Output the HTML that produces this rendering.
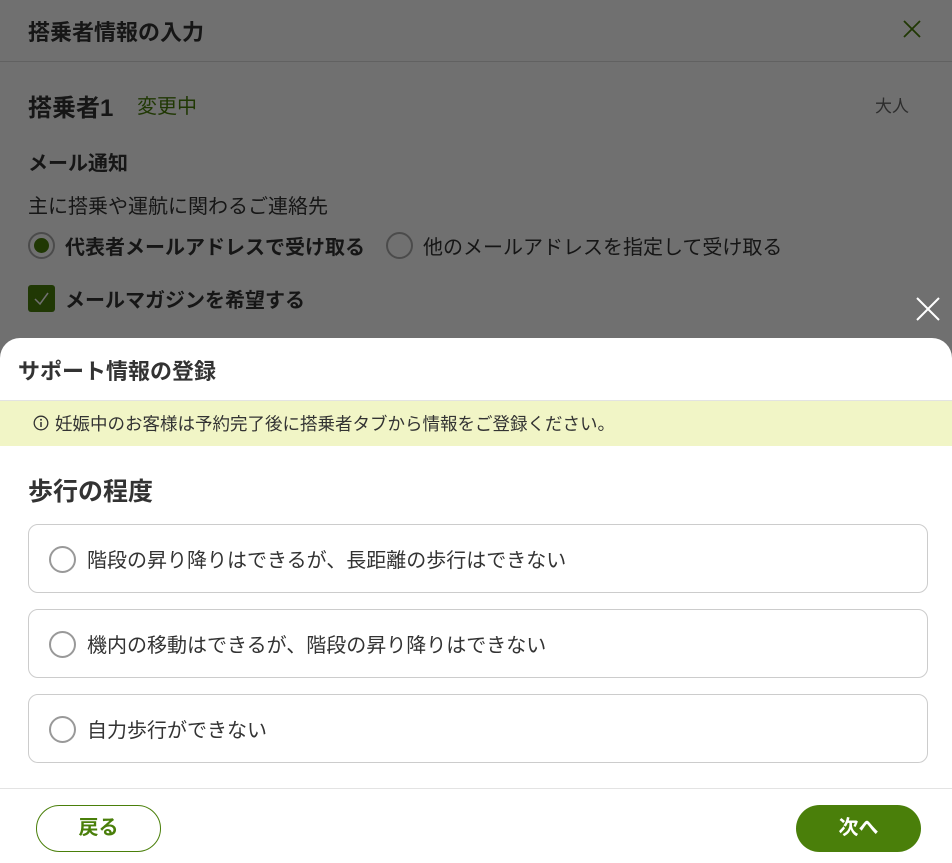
<!DOCTYPE html>
<html><head><meta charset="utf-8"><style>
*{box-sizing:border-box;margin:0;padding:0}
body{width:952px;height:863px;position:relative;overflow:hidden;background:#fff;font-family:"Liberation Sans","Noto Sans CJK JP",sans-serif;color:#333}
.a{position:absolute;white-space:nowrap}
.ov{position:absolute;left:0;top:0;width:952px;height:863px;background:rgba(0,0,0,0.56)}
.sheet{position:absolute;left:0;top:338px;width:952px;height:525px;background:#fff;border-radius:20px 20px 0 0}
.opt{position:absolute;left:28px;width:900px;height:69px;border:1px solid #ccc;border-radius:10px}
.opt .r{position:absolute;left:20px;top:21px;width:27px;height:27px;border:2px solid #999;border-radius:50%}
.opt span{position:absolute;left:58px;top:19px;font-size:20px;color:#333}
</style></head><body>
<div class="a" style="left:28px;top:15px;font-size:22px;font-weight:bold">搭乗者情報の入力</div>
<svg class="a" style="left:903px;top:20px" width="18" height="18"><path d="M1 1L17 17M17 1L1 17" stroke="#4a7f0a" stroke-width="1.8"/></svg>
<div class="a" style="left:0;top:61px;width:952px;height:1px;background:#ddd"></div>
<div class="a" style="left:28px;top:88px;font-size:24px;font-weight:bold">搭乗者1</div>
<div class="a" style="left:137px;top:90px;font-size:20px;color:#4a7f0a">変更中</div>
<div class="a" style="left:875px;top:92px;font-size:17px;color:#666">大人</div>
<div class="a" style="left:28px;top:147px;font-size:20px;font-weight:bold">メール通知</div>
<div class="a" style="left:28px;top:190px;font-size:20px">主に搭乗や運航に関わるご連絡先</div>
<div class="a" style="left:28px;top:232px;width:27px;height:27px;border:2px solid #aaa;border-radius:50%"><div style="position:absolute;left:4px;top:4px;width:15px;height:15px;border-radius:50%;background:#4a7f0a"></div></div>
<div class="a" style="left:65px;top:231px;font-size:20px;font-weight:bold">代表者メールアドレスで受け取る</div>
<div class="a" style="left:386px;top:232px;width:27px;height:27px;border:2px solid #aaa;border-radius:50%"></div>
<div class="a" style="left:423px;top:231px;font-size:20px">他のメールアドレスを指定して受け取る</div>
<div class="a" style="left:28px;top:285px;width:27px;height:27px;background:#4a7f0a;border-radius:3px"><svg width="27" height="27"><path d="M7 14L12 19L20 8" stroke="#fff" stroke-width="1.5" fill="none"/></svg></div>
<div class="a" style="left:65px;top:284px;font-size:20px;font-weight:bold">メールマガジンを希望する</div>
<div class="ov"></div>
<svg class="a" style="left:916px;top:297px" width="24" height="24"><path d="M1 1L23 23M23 1L1 23" stroke="#fff" stroke-width="2"/></svg>
<div class="sheet">
<div class="a" style="left:18px;top:16px;font-size:22px;font-weight:bold">サポート情報の登録</div>
<div class="a" style="left:0;top:62px;width:952px;height:46px;background:#f1f5c6;border-top:1px solid #e3e3e3"></div>
<svg class="a" style="left:33px;top:77px" width="16" height="16"><circle cx="8" cy="8" r="6.8" fill="none" stroke="#333" stroke-width="1.3"/><path d="M8 7V12" stroke="#333" stroke-width="1.5"/><circle cx="8" cy="4.8" r="1" fill="#333"/></svg>
<div class="a" style="left:55px;top:73px;font-size:17.5px">妊娠中のお客様は予約完了後に搭乗者タブから情報をご登録ください。</div>
<div class="a" style="left:28px;top:134px;font-size:25px;font-weight:bold">歩行の程度</div>
<div class="opt" style="top:186px"><div class="r"></div><span>階段の昇り降りはできるが、長距離の歩行はできない</span></div>
<div class="opt" style="top:271px"><div class="r"></div><span>機内の移動はできるが、階段の昇り降りはできない</span></div>
<div class="opt" style="top:356px"><div class="r"></div><span>自力歩行ができない</span></div>
<div class="a" style="left:0;top:450px;width:952px;height:1px;background:#e3e3e3"></div>
<div class="a" style="left:36px;top:467px;width:125px;height:47px;border:1.5px solid #4a7f0a;border-radius:24px;color:#4a7f0a;font-size:20px;font-weight:bold;text-align:center;line-height:44px">戻る</div>
<div class="a" style="left:796px;top:467px;width:125px;height:47px;background:#4a7f0a;border-radius:24px;color:#fff;font-size:20px;font-weight:bold;text-align:center;line-height:47px">次へ</div>
</div>
</body></html>
